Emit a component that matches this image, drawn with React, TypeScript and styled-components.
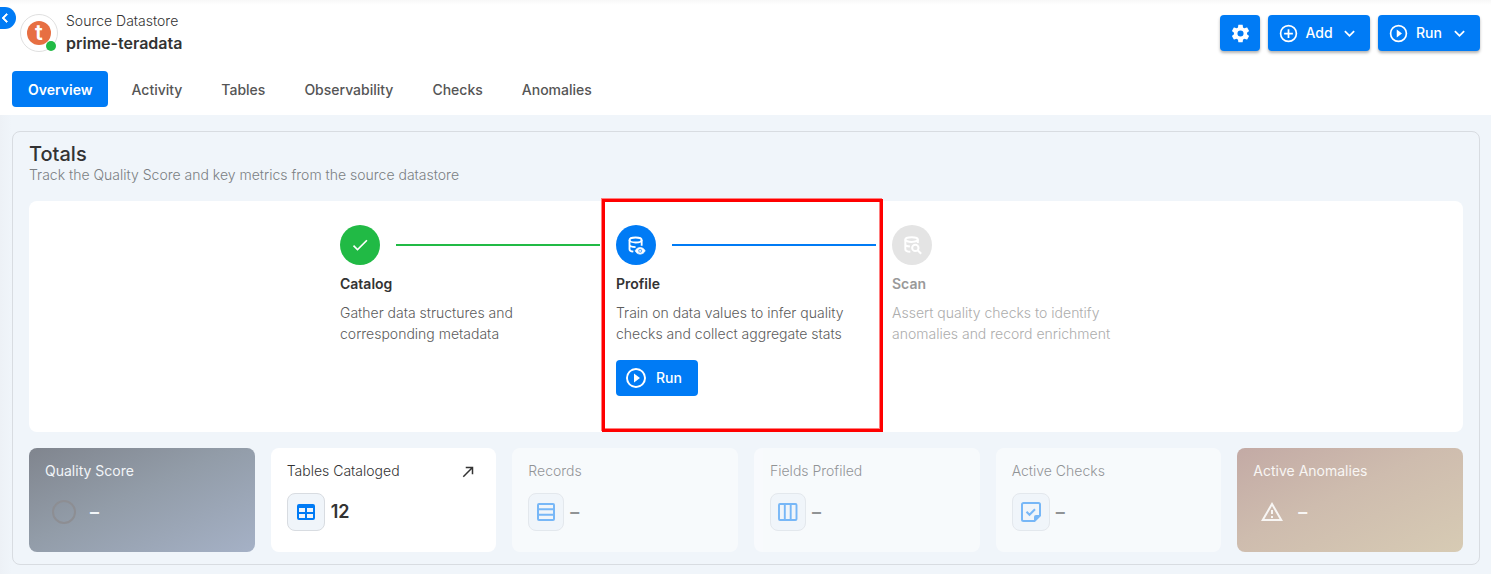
import React from "react";
import styled, { createGlobalStyle, css } from "styled-components";

const blue = "#007bf5";
const green = "#21ba45";

const GlobalStyle = createGlobalStyle`
  *, *::before, *::after { box-sizing: border-box; }
  body {
    margin: 0;
    background: #f0f5fa;
    color: #333;
    font-family: Inter, "Liberation Sans", sans-serif;
    font-size: 14px;
  }
  h1, h2, h3, p, ol, ul { margin: 0; padding: 0; font-weight: 400; }
  button { font: inherit; color: inherit; cursor: pointer; border: 0; padding: 0; }
  svg { display: block; flex: none; }
`;

/* ---------- icons ---------- */

const paths = {
  cog: "M12,15.5A3.5,3.5 0 0,1 8.5,12A3.5,3.5 0 0,1 12,8.5A3.5,3.5 0 0,1 15.5,12A3.5,3.5 0 0,1 12,15.5M19.43,12.97C19.47,12.65 19.5,12.33 19.5,12C19.5,11.67 19.47,11.34 19.43,11L21.54,9.37C21.73,9.22 21.78,8.95 21.66,8.73L19.66,5.27C19.54,5.05 19.27,4.96 19.05,5.05L16.56,6.05C16.04,5.66 15.5,5.32 14.87,5.07L14.5,2.42C14.46,2.18 14.25,2 14,2H10C9.75,2 9.54,2.18 9.5,2.42L9.13,5.07C8.5,5.32 7.96,5.66 7.44,6.05L4.95,5.05C4.73,4.96 4.46,5.05 4.34,5.27L2.34,8.73C2.21,8.95 2.27,9.22 2.46,9.37L4.57,11C4.53,11.34 4.5,11.67 4.5,12C4.5,12.33 4.53,12.65 4.57,12.97L2.46,14.63C2.27,14.78 2.21,15.05 2.34,15.27L4.34,18.73C4.46,18.95 4.73,19.03 4.95,18.95L7.44,17.94C7.96,18.34 8.5,18.68 9.13,18.93L9.5,21.58C9.54,21.82 9.75,22 10,22H14C14.25,22 14.46,21.82 14.5,21.58L14.87,18.93C15.5,18.67 16.04,18.34 16.56,17.94L19.05,18.95C19.27,19.03 19.54,18.95 19.66,18.73L21.66,15.27C21.78,15.05 21.73,14.78 21.54,14.63L19.43,12.97Z",
  plus: "M12,20C7.59,20 4,16.41 4,12C4,7.59 7.59,4 12,4C16.41,4 20,7.59 20,12C20,16.41 16.41,20 12,20M12,2A10,10 0 0,0 2,12A10,10 0 0,0 12,22A10,10 0 0,0 22,12A10,10 0 0,0 12,2M13,7H11V11H7V13H11V17H13V13H17V11H13V7Z",
  play: "M12,20C7.59,20 4,16.41 4,12C4,7.59 7.59,4 12,4C16.41,4 20,7.59 20,12C20,16.41 16.41,20 12,20M12,2A10,10 0 0,0 2,12A10,10 0 0,0 12,22A10,10 0 0,0 22,12A10,10 0 0,0 12,2M10,16.5L16,12L10,7.5V16.5Z",
  down: "M7.41,8.58L12,13.17L16.59,8.58L18,10L12,16L6,10L7.41,8.58Z",
  left: "M15.41,16.58L10.83,12L15.41,7.41L14,6L8,12L14,18L15.41,16.58Z",
  check: "M21,7L9,19L3.5,13.5L4.91,12.09L9,16.17L19.59,5.59L21,7Z",
  arrow: "M5,17.59L15.59,7H9V5H19V15H17V8.41L6.41,19L5,17.59Z",
  table: "M5,4H19A2,2 0 0,1 21,6V18A2,2 0 0,1 19,20H5A2,2 0 0,1 3,18V6A2,2 0 0,1 5,4M5,8V12H11V8H5M13,8V12H19V8H13M5,14V18H11V14H5M13,14V18H19V14H13Z",
  alert: "M12,2L1,21H23M12,6L19.53,19H4.47M11,10V14H13V10M11,16V18H13V16",
  eye: "M17,18A1,1 0 0,1 18,19A1,1 0 0,1 17,20A1,1 0 0,1 16,19A1,1 0 0,1 17,18M17,15C14.27,15 11.94,16.66 11,19C11.94,21.34 14.27,23 17,23C19.73,23 22.06,21.34 23,19C22.06,16.66 19.73,15 17,15M17,21.5A2.5,2.5 0 0,1 14.5,19A2.5,2.5 0 0,1 17,16.5A2.5,2.5 0 0,1 19.5,19A2.5,2.5 0 0,1 17,21.5Z",
};

const Icon = ({ name, size = 21 }: { name: keyof typeof paths; size?: number }) => (
  <svg width={size} height={size} viewBox="0 0 24 24" fill="currentColor" aria-hidden="true">
    <path d={paths[name]} />
  </svg>
);

const DatabaseEye = () => (
  <svg width="20" height="20" viewBox="0 0 24 24" fill="none" stroke="currentColor" strokeWidth="2.200" aria-hidden="true">
    <ellipse cx="11.500" cy="6" rx="7.300" ry="3" />
    <path d="M4.200 6v11c0 1.400 1.800 2.500 4.600 3M18.800 6v7M4.200 11.500c0 1.700 2.800 2.900 7.300 3" />
    <path d={paths.eye} fill="currentColor" stroke="currentColor" strokeWidth="0.800" />
  </svg>
);

const DatabaseSearch = () => (
  <svg width="20" height="20" viewBox="0 0 24 24" fill="none" stroke="currentColor" strokeWidth="2.400" aria-hidden="true">
    <ellipse cx="11.500" cy="5.500" rx="7.500" ry="2.800" />
    <path d="M4 5.500v11.500c0 1.600 2.400 2.900 6 3.100M19 5.500v4M4 11c0 1.400 2 2.400 5.500 2.800" />
    <circle cx="16" cy="15.500" r="3.800" />
    <path d="M18.800 18.300l4.200 4.200" />
  </svg>
);

const RowsIcon = () => (
  <svg width="22" height="24" viewBox="0 0 22 24" fill="none" stroke="currentColor" strokeWidth="2" aria-hidden="true">
    <rect x="3" y="4" width="16" height="16" rx="1" />
    <path d="M3 9.300h16M3 14.700h16" />
  </svg>
);

const ColumnsIcon = () => (
  <svg width="22" height="24" viewBox="0 0 22 24" fill="none" stroke="currentColor" strokeWidth="1.900" aria-hidden="true">
    <rect x="2" y="4" width="17.500" height="16" rx="1" />
    <path d="M7.800 4v16M13.700 4v16" />
  </svg>
);

const NoteCheckIcon = () => (
  <svg width="24" height="24" viewBox="0 0 24 24" fill="none" stroke="currentColor" strokeWidth="2" aria-hidden="true">
    <path d="M15.500 21H4.500a1.500 1.500 0 0 1-1.500-1.500v-15a1.500 1.500 0 0 1 1.500-1.500h15a1.500 1.500 0 0 1 1.500 1.500v11z" />
    <path d="M15 21.500v-4.500a2 2 0 0 1 2-2h4.500z" fill="currentColor" stroke="none" />
    <path d="M7.500 11.800l3 3 5.500-5.500" />
  </svg>
);

/* ---------- header ---------- */

const Header = styled.header`
  position: relative;
  background: linear-gradient(to bottom, #f8f8f8, #fff 5px);
`;

const CollapseButton = styled.button`
  position: absolute;
  top: 7px;
  left: 0;
  width: 16px;
  height: 22px;
  display: flex;
  align-items: center;
  justify-content: center;
  padding-right: 6px;
  border-radius: 0 11px 11px 0;
  background: ${blue};
  color: #fff;

  path { stroke: currentColor; }
`;

const TopRow = styled.div`
  display: flex;
  align-items: center;
  gap: 8px;
  min-height: 66px;
  padding: 0 11px 0 20px;
`;

const Avatar = styled.div`
  position: relative;
  display: grid;
  place-items: center;
  width: 38px;
  height: 38px;
  border: 1px solid #e0e0e0;
  border-radius: 50%;
  background: #fff;
`;

const Logo = styled.span`
  width: 24px;
  height: 24px;
  border-radius: 50%;
  background: #e76f42;
  color: #fff;
  font-size: 22px;
  font-weight: 600;
  line-height: 22px;
  text-align: center;
`;

const StatusDot = styled.span`
  position: absolute;
  right: 1px;
  bottom: 0;
  width: 10px;
  height: 10px;
  border-radius: 50%;
  background: ${green};
`;

const Identity = styled.div`
  flex: 1;
  min-width: 0;
`;

const Kind = styled.p`
  line-height: 20px;
  font-weight: 300;
`;

const Name = styled.h1`
  font-size: 16px;
  font-weight: 600;
  line-height: 24px;
`;

const Actions = styled.div`
  display: flex;
  gap: 8px;
`;

const Button = styled.button<{ $raised?: boolean; $shape?: "icon" | "menu" }>`
  display: inline-flex;
  align-items: center;
  gap: 8px;
  height: 36px;
  padding: 0 16px 0 8px;
  border-radius: 4px;
  background: ${blue};
  color: #fff;
  font-weight: 500;
  line-height: 16px;
  ${(p) => p.$raised && css`box-shadow: 0 2px 3px rgba(0, 0, 0, 0.3);`}
  ${(p) => p.$shape === "icon" && css`width: 40px; padding: 0; justify-content: center;`}
  ${(p) => p.$shape === "menu" && css`width: 102px; padding: 0 10px; gap: 0; justify-content: space-between;`}
`;

const Tabs = styled.nav`
  display: flex;
  flex-wrap: wrap;
  gap: 7px;
  padding: 5px 12px 8px;
`;

const Tab = styled.a<{ $active?: boolean }>`
  padding: 2px 16px 0;
  border-radius: 4px;
  line-height: 34px;
  font-weight: 500;
  text-decoration: none;
  color: ${(p) => (p.$active ? "#fff" : "#555")};
  background: ${(p) => (p.$active ? blue : "transparent")};
  ${(p) => p.$active && css`font-weight: 600;`}
`;

/* ---------- totals ---------- */

const Main = styled.main`
  padding: 16px 11px 9px 12px;
  background: linear-gradient(to right, #edf1f6, #f0f5fa 12px);
`;

const Panel = styled.section`
  padding: 10px 16px 12px;
  border: 1px solid #d8dce1;
  border-radius: 8px;
`;

const Title = styled.h2`
  font-size: 20px;
  font-weight: 500;
  line-height: 24px;
`;

const Subtitle = styled.p`
  padding-bottom: 2px;
  line-height: 17px;
  font-weight: 300;
  color: #7b7f83;
`;

const Steps = styled.ol`
  display: flex;
  justify-content: center;
  margin: 16px 0;
  border-radius: 8px;
  background: #fff;
  list-style: none;
`;

const Step = styled.li`
  position: relative;
  width: 276px;
  padding: 24px 8px 36px;
`;

const Highlight = styled.div`
  position: absolute;
  inset: -2px 1px 0 -6px;
  border: 3px solid #f00;
  box-shadow: -1px -1px 0 #ff7f7f, inset -1px -1px 0 #ff7f7f;
  pointer-events: none;
`;

const Track = styled.div<{ $color: string }>`
  display: flex;
  align-items: center;
  gap: 16px;
  color: ${(p) => p.$color};
`;

const Bullet = styled.span<{ $color: string }>`
  display: grid;
  place-items: center;
  width: 40px;
  height: 40px;
  border-radius: 50%;
  background: ${(p) => p.$color};
  color: #fff;
`;

const Line = styled.span`
  flex: 1;
  height: 2px;
  background: currentColor;
`;

const StepTitle = styled.h3<{ $muted?: boolean }>`
  margin: 8px 0;
  font-size: 14px;
  font-weight: 600;
  line-height: 21px;
  color: ${(p) => (p.$muted ? "#999" : "#333")};
`;

const StepText = styled.p<{ $muted?: boolean }>`
  margin-bottom: 16px;
  line-height: 21px;
  font-weight: 300;
  color: ${(p) => (p.$muted ? "#adadad" : "#5c5c5c")};
`;

const Cards = styled.div`
  display: grid;
  grid-template-columns: repeat(6, minmax(0, 1fr));
  gap: 16px;
`;

const tones = {
  plain: css`background: #fff; color: #333;`,
  muted: css`background: #fff; color: #333; opacity: 0.5;`,
  score: css`background: linear-gradient(155deg, #80858e, #929ca8 45%, #a5b1c6); color: #f2f5f8;`,
  anomaly: css`background: linear-gradient(155deg, #c3aaa5, #cebcae 45%, #d7cbb4); color: #f8f6f4;`,
};

const Card = styled.article<{ $tone: keyof typeof tones }>`
  padding: 12px 16px 21px;
  border-radius: 8px;
  ${(p) => tones[p.$tone]}
`;

const CardHead = styled.div`
  display: flex;
  align-items: flex-start;
  justify-content: space-between;
  height: 24px;
  margin-bottom: 9px;
`;

const Label = styled.h3<{ $onColor?: boolean }>`
  font-size: 14px;
  line-height: 22px;
  font-weight: ${(p) => (p.$onColor ? 400 : 300)};
`;

const OpenButton = styled.button`
  display: grid;
  place-items: center;
  width: 24px;
  height: 24px;
  background: none;
`;

const CardBody = styled.div<{ $wide?: boolean }>`
  display: flex;
  align-items: center;
  gap: ${(p) => (p.$wide ? 14 : 6)}px;
  padding-left: ${(p) => (p.$wide ? 7 : 0)}px;
  height: 38px;
`;

const IconBox = styled.span`
  padding: 6px;
  border: 1px solid #d8dce1;
  border-radius: 8px;
  background: #f0f5fa;
  color: ${blue};
`;

const Ring = styled.span`
  width: 24px;
  height: 24px;
  border: 2px solid #8d8e93;
  border-radius: 50%;
`;

const Value = styled.strong`
  font-size: 18px;
  font-weight: 600;
  line-height: 24px;
`;

const tabs = ["Overview", "Activity", "Tables", "Observability", "Checks", "Anomalies"];

const pending = [
  { label: "Records", icon: <RowsIcon /> },
  { label: "Fields Profiled", icon: <ColumnsIcon /> },
  { label: "Active Checks", icon: <NoteCheckIcon /> },
];

export default function App() {
  return (
    <>
      <GlobalStyle />
      <Header>
        <CollapseButton aria-label="Collapse sidebar">
          <Icon name="left" size={18} />
        </CollapseButton>
        <TopRow>
          <Avatar>
            <Logo>t</Logo>
            <StatusDot />
          </Avatar>
          <Identity>
            <Kind>Source Datastore</Kind>
            <Name>prime-teradata</Name>
          </Identity>
          <Actions>
            <Button $raised $shape="icon" aria-label="Settings">
              <Icon name="cog" />
            </Button>
            <Button $raised $shape="menu">
              <Icon name="plus" />
              Add
              <Icon name="down" />
            </Button>
            <Button $raised $shape="menu">
              <Icon name="play" />
              Run
              <Icon name="down" />
            </Button>
          </Actions>
        </TopRow>
        <Tabs>
          {tabs.map((tab, i) => (
            <Tab key={tab} href={`#${tab.toLowerCase()}`} $active={i === 0}>
              {tab}
            </Tab>
          ))}
        </Tabs>
      </Header>
      <Main>
        <Panel>
          <Title>Totals</Title>
          <Subtitle>Track the Quality Score and key metrics from the source datastore</Subtitle>
          <Steps>
            <Step>
              <Track $color={green}>
                <Bullet $color={green}>
                  <Icon name="check" size={20} />
                </Bullet>
                <Line />
              </Track>
              <StepTitle>Catalog</StepTitle>
              <StepText>Gather data structures and corresponding metadata</StepText>
            </Step>
            <Step>
              <Track $color={blue}>
                <Bullet $color={blue}>
                  <DatabaseEye />
                </Bullet>
                <Line />
              </Track>
              <StepTitle>Profile</StepTitle>
              <StepText>Train on data values to infer quality checks and collect aggregate stats</StepText>
              <Button>
                <Icon name="play" size={24} />
                Run
              </Button>
              <Highlight />
            </Step>
            <Step>
              <Track $color="#e4e4e4">
                <Bullet $color="#e4e4e4">
                  <DatabaseSearch />
                </Bullet>
              </Track>
              <StepTitle $muted>Scan</StepTitle>
              <StepText $muted>Assert quality checks to identify anomalies and record enrichment</StepText>
            </Step>
          </Steps>
          <Cards>
            <Card $tone="score">
              <CardHead>
                <Label $onColor>Quality Score</Label>
              </CardHead>
              <CardBody $wide>
                <Ring />
                <Value>–</Value>
              </CardBody>
            </Card>
            <Card $tone="plain">
              <CardHead>
                <Label>Tables Cataloged</Label>
                <OpenButton aria-label="Open tables">
                  <Icon name="arrow" size={18} />
                </OpenButton>
              </CardHead>
              <CardBody>
                <IconBox>
                  <Icon name="table" size={24} />
                </IconBox>
                <Value>12</Value>
              </CardBody>
            </Card>
            {pending.map((card) => (
              <Card key={card.label} $tone="muted">
                <CardHead>
                  <Label>{card.label}</Label>
                </CardHead>
                <CardBody>
                  <IconBox>{card.icon}</IconBox>
                  <Value>–</Value>
                </CardBody>
              </Card>
            ))}
            <Card $tone="anomaly">
              <CardHead>
                <Label $onColor>Active Anomalies</Label>
              </CardHead>
              <CardBody $wide>
                <Icon name="alert" size={24} />
                <Value>–</Value>
              </CardBody>
            </Card>
          </Cards>
        </Panel>
      </Main>
    </>
  );
}
